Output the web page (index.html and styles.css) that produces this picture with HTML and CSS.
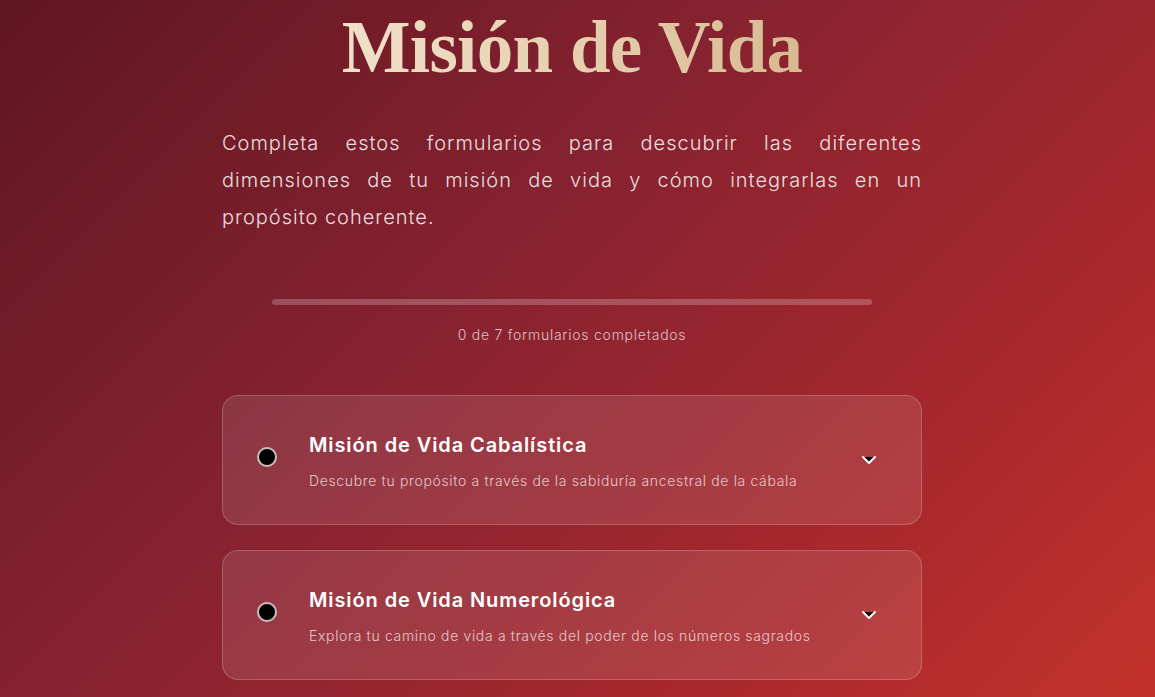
FILE: index.html
```html
<!DOCTYPE html>
<html lang="es">
<head>
<meta charset="utf-8">
<title>Misión de Vida</title>
<link rel="stylesheet" href="styles.css">
</head>
<body>
<main class="page">
  <h1 class="title">Misión de Vida</h1>
  <p class="intro">Completa estos formularios para descubrir las diferentes dimensiones de tu misión de vida y cómo integrarlas en un propósito coherente.</p>

  <section class="progress">
    <div class="progress-track"><div class="progress-fill" style="width:0%"></div></div>
    <p class="progress-label">0 de 7 formularios completados</p>
  </section>

  <section class="cards">
    <article class="card">
      <span class="radio"></span>
      <div class="card-text">
        <h2 class="card-title">Misión de Vida Cabalística</h2>
        <p class="card-desc">Descubre tu propósito a través de la sabiduría ancestral de la cábala</p>
      </div>
      <svg class="chevron" width="24" height="24" viewBox="0 0 24 24"><path d="M6 9l6 6 6-6" stroke="#fff" stroke-width="2" stroke-linecap="round" stroke-linejoin="round"/></svg>
    </article>
    <article class="card">
      <span class="radio"></span>
      <div class="card-text">
        <h2 class="card-title">Misión de Vida Numerológica</h2>
        <p class="card-desc">Explora tu camino de vida a través del poder de los números sagrados</p>
      </div>
      <svg class="chevron" width="24" height="24" viewBox="0 0 24 24"><path d="M6 9l6 6 6-6" stroke="#fff" stroke-width="2" stroke-linecap="round" stroke-linejoin="round"/></svg>
    </article>
  </section>
</main>
</body>
</html>
```

FILE: styles.css
```css
html, body {
  margin: 0;
  padding: 0;
}

body {
  box-sizing: border-box;
  min-height: 100vh;
  padding-right: 11px;
  background: linear-gradient(135deg, #5f1620 0%, #862230 40%, #a8282d 75%, #c3322a 100%);
  font-family: "Inter", "Open Sans", sans-serif;
  color: #fff;
  overflow: hidden;
}

.page {
  width: 700px;
  margin: 0 auto;
  padding-top: 5px;
}

.title {
  margin: 0;
  text-align: center;
  font-family: "Liberation Serif", "DejaVu Serif", serif;
  font-weight: 700;
  font-size: 73px;
  line-height: 86px;
  letter-spacing: -0.7px;
  background: linear-gradient(90deg, #f6e9d8 0%, #e6d0b0 50%, #cfae80 100%);
  -webkit-background-clip: text;
  background-clip: text;
  color: transparent;
}

.intro {
  margin: 34px 0 0;
  font-size: 20px;
  font-weight: 300;
  line-height: 37px;
  letter-spacing: 1px;
  text-align: justify;
  color: rgba(255, 255, 255, 0.86);
}

.progress {
  margin: 63px 50px 0;
}

.progress-track {
  height: 6px;
  border-radius: 3px;
  background: rgba(255, 255, 255, 0.22);
  overflow: hidden;
}

.progress-fill {
  height: 100%;
  background: #e6c79a;
}

.progress-label {
  margin: 21px 0 0;
  text-align: center;
  font-size: 14px;
  font-weight: 300;
  letter-spacing: 0.75px;
  color: rgba(255, 255, 255, 0.72);
}

.cards {
  margin-top: 52px;
  display: flex;
  flex-direction: column;
  gap: 25px;
}

.card {
  height: 128px;
  display: flex;
  align-items: center;
  padding: 0 34px;
  border: 1px solid rgba(255, 255, 255, 0.2);
  border-radius: 16px;
  background: rgba(255, 255, 255, 0.1);
}

.radio {
  flex: none;
  width: 16px;
  height: 16px;
  border-radius: 50%;
  background: #000;
  border: 2px solid #c8c0c0;
  margin-top: -6px;
}

.card-text {
  flex: 1;
  margin-left: 32px;
}

.card-title {
  margin: 0;
  font-size: 20px;
  font-weight: 600;
  line-height: 26px;
  letter-spacing: 0.9px;
  color: #fff;
}

.card-desc {
  margin: 14px 0 0;
  font-size: 14px;
  font-weight: 300;
  letter-spacing: 0.65px;
  color: rgba(255, 255, 255, 0.72);
}

.chevron {
  flex: none;
  margin-right: 6px;
}
```
